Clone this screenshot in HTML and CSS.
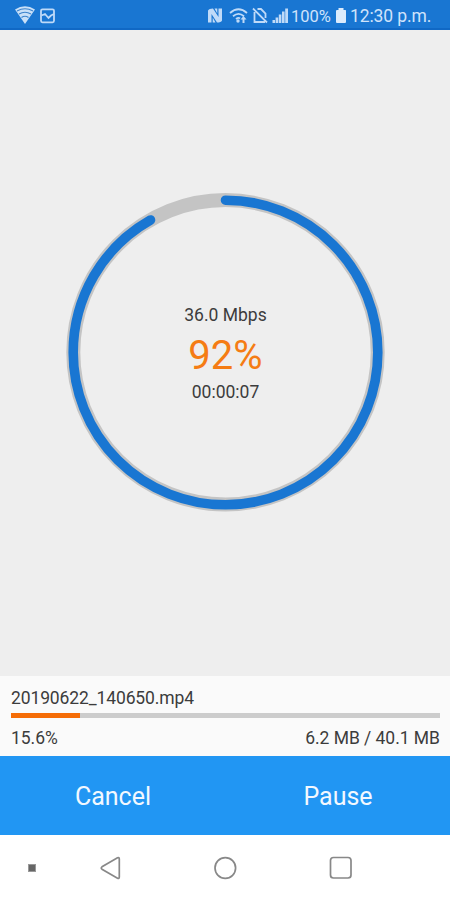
FILE: index.html
```html
<!DOCTYPE html>
<html lang="en">
<head>
<meta charset="utf-8">
<title>File transfer</title>
<link rel="stylesheet" href="styles.css">
</head>
<body>
<div class="screen">
  <header class="status">
    <svg class="status-left" width="60" height="30" viewBox="0 0 60 30">
      <path class="fan" d="M15 9.500Q25 3 35 9.500L25 24Z"/>
      <path class="fan-line" d="M17 11Q25 6.500 33 11M19 14Q25 10.500 31 14M21.500 17.500Q25 15 28.500 17.500"/>
      <rect class="line" x="41" y="9.300" width="13" height="13" rx="1.500"/>
      <path class="line" d="M41.500 15.500L45 14L48.500 18L51 15.500L54 14"/>
    </svg>
    <svg class="status-icons" width="84" height="30" viewBox="206 0 84 30">
      <path class="fill" d="M208 10.500Q209 8.500 213 8.500L218.500 17V8.500H222V20.500Q221 22.500 217 22.500L211.500 14V22.500H208Z"/>
      <path class="fill" d="M214.500 8.500H217.300V13.500ZM212.700 17.500V22.500H215.500Z"/>
      <path class="line" d="M230 13Q238.500 5.500 247 13M233 16.300Q238.500 11.500 244 16.300M236 19Q238.500 17 240 18.500"/>
      <circle class="fill" cx="238" cy="21" r="1.700"/>
      <path class="fill" d="M243.500 16L246.500 19.500H244.500V23H242.500V19.500H240.500Z"/>
      <path class="line" d="M254.500 12V22H265M257.500 9H261L265.500 13.500V18M253 8.500L267 22.500"/>
      <path class="fill" d="M272.500 20H275V23H272.500ZM275.600 17.500H278.200V23H275.600ZM278.800 14.500H281.400V23H278.800ZM282 11.500H284.600V23H282ZM285.200 8.500H288V23H285.200Z"/>
    </svg>
    <span class="battery-text">100%</span>
    <svg class="battery" width="12" height="30" viewBox="0 0 12 30"><path d="M3.500 8H8.500V10H10.500Q11 10 11 11V22Q11 23 10 23H2Q1 23 1 22V11Q1 10 2 10H3.500Z"/></svg>
    <span class="clock">12:30 p.m.</span>
  </header>
  <main class="transfer">
    <div class="dial">
      <svg class="ring" width="320" height="320" viewBox="0 0 320 320">
        <circle class="track" cx="160.500" cy="160.300" r="152.200"/>
        <circle class="arc" cx="160.500" cy="160.500" r="152.300" pathLength="100" stroke-dasharray="91.800 100" transform="rotate(-90 160.500 160.500)"/>
      </svg>
      <div class="speed">36.0 Mbps</div>
      <div class="percent">92%</div>
      <div class="time">00:00:07</div>
    </div>
  </main>
  <section class="file">
    <div class="name">20190622_140650.mp4</div>
    <div class="bar"><div class="bar-fill"></div></div>
    <div class="details"><span class="done">15.6%</span><span class="size">6.2 MB / 40.1 MB</span></div>
  </section>
  <div class="actions"><button>Cancel</button><button>Pause</button></div>
  <nav class="nav">
    <svg width="450" height="65" viewBox="0 835 450 65">
      <rect class="dot" x="28.500" y="864.500" width="7" height="7"/>
      <path d="M117.500 857.800Q119.300 857 119.300 859V877Q119.300 879 117.500 878.200L102 869.200Q100.500 868 102 866.800Z"/>
      <circle cx="225.300" cy="868" r="10.300"/>
      <rect x="330.500" y="857.500" width="20.500" height="20.500" rx="3"/>
    </svg>
  </nav>
</div>
</body>
</html>
```
FILE: styles.css
```css
* { box-sizing: border-box; }
body { margin: 0; font-family: Roboto, "Liberation Sans", sans-serif; color: #3c3c3c; }
.screen { width: 450px; height: 900px; display: flex; flex-direction: column; background: #fff; overflow: hidden; }
svg { display: block; flex: none; }
.status { height: 30px; display: flex; background: #1976d2; border-bottom: 2px solid #1068c5; color: #cfe3fb; line-height: 33px; white-space: nowrap; }
.status-left { margin-right: 146px; }
.line { fill: none; stroke: #bfdaf8; stroke-width: 1.8; }
.fill { fill: #bfdaf8; }
.fan { fill: #c9e0f8; }
.fan-line { fill: none; stroke: #3c83cd; stroke-width: 1.2; }
.battery-text { width: 45px; padding-left: 1px; font-size: 16.5px; }
.battery { fill: #dcebfc; }
.clock { padding-left: 3px; font-size: 17.5px; letter-spacing: -0.1px; }
.transfer { height: 646px; display: flex; justify-content: center; padding-top: 162px; background: #eee; }
.dial { width: 320px; height: 320px; display: grid; grid-template-rows: 104px 38px 40px 36px; justify-items: center; }
.ring { grid-area: 1 / 1 / 5 / 2; height: 320px; }
.track, .arc { fill: none; }
.track { stroke: #c4c4c4; stroke-width: 14px; }
.arc { stroke: #1976d2; stroke-width: 9.6px; stroke-linecap: round; }
.speed, .percent, .time { padding-left: 1px; }
.speed { grid-area: 2 / 1; font-size: 17.5px; line-height: 38px; }
.percent { grid-area: 3 / 1; font-size: 40px; line-height: 43px; color: #f57c14; }
.time { grid-area: 4 / 1; font-size: 17.5px; line-height: 36px; }
.file { height: 80px; padding: 12px 10px 0 11px; background: #fafafa; font-size: 17.5px; }
.name { height: 25px; line-height: 20px; letter-spacing: -0.12px; }
.bar { height: 5px; background: #ccc; }
.bar-fill { width: 16%; height: 5px; background: #f56c06; }
.details { display: flex; justify-content: space-between; line-height: 18px; padding-top: 11px; letter-spacing: -0.03px; }
.actions { height: 79px; display: flex; background: #2196f3; }
button { flex: 1; border: 0; padding: 3px 0 0 1px; background: none; color: #f2f8ff; font: 25px/76px Roboto, "Liberation Sans", sans-serif; }
.nav { height: 65px; }
.nav svg { fill: none; stroke: #888; stroke-width: 1.7; }
.nav .dot { fill: #666; stroke: #999; stroke-width: 1; }
```
